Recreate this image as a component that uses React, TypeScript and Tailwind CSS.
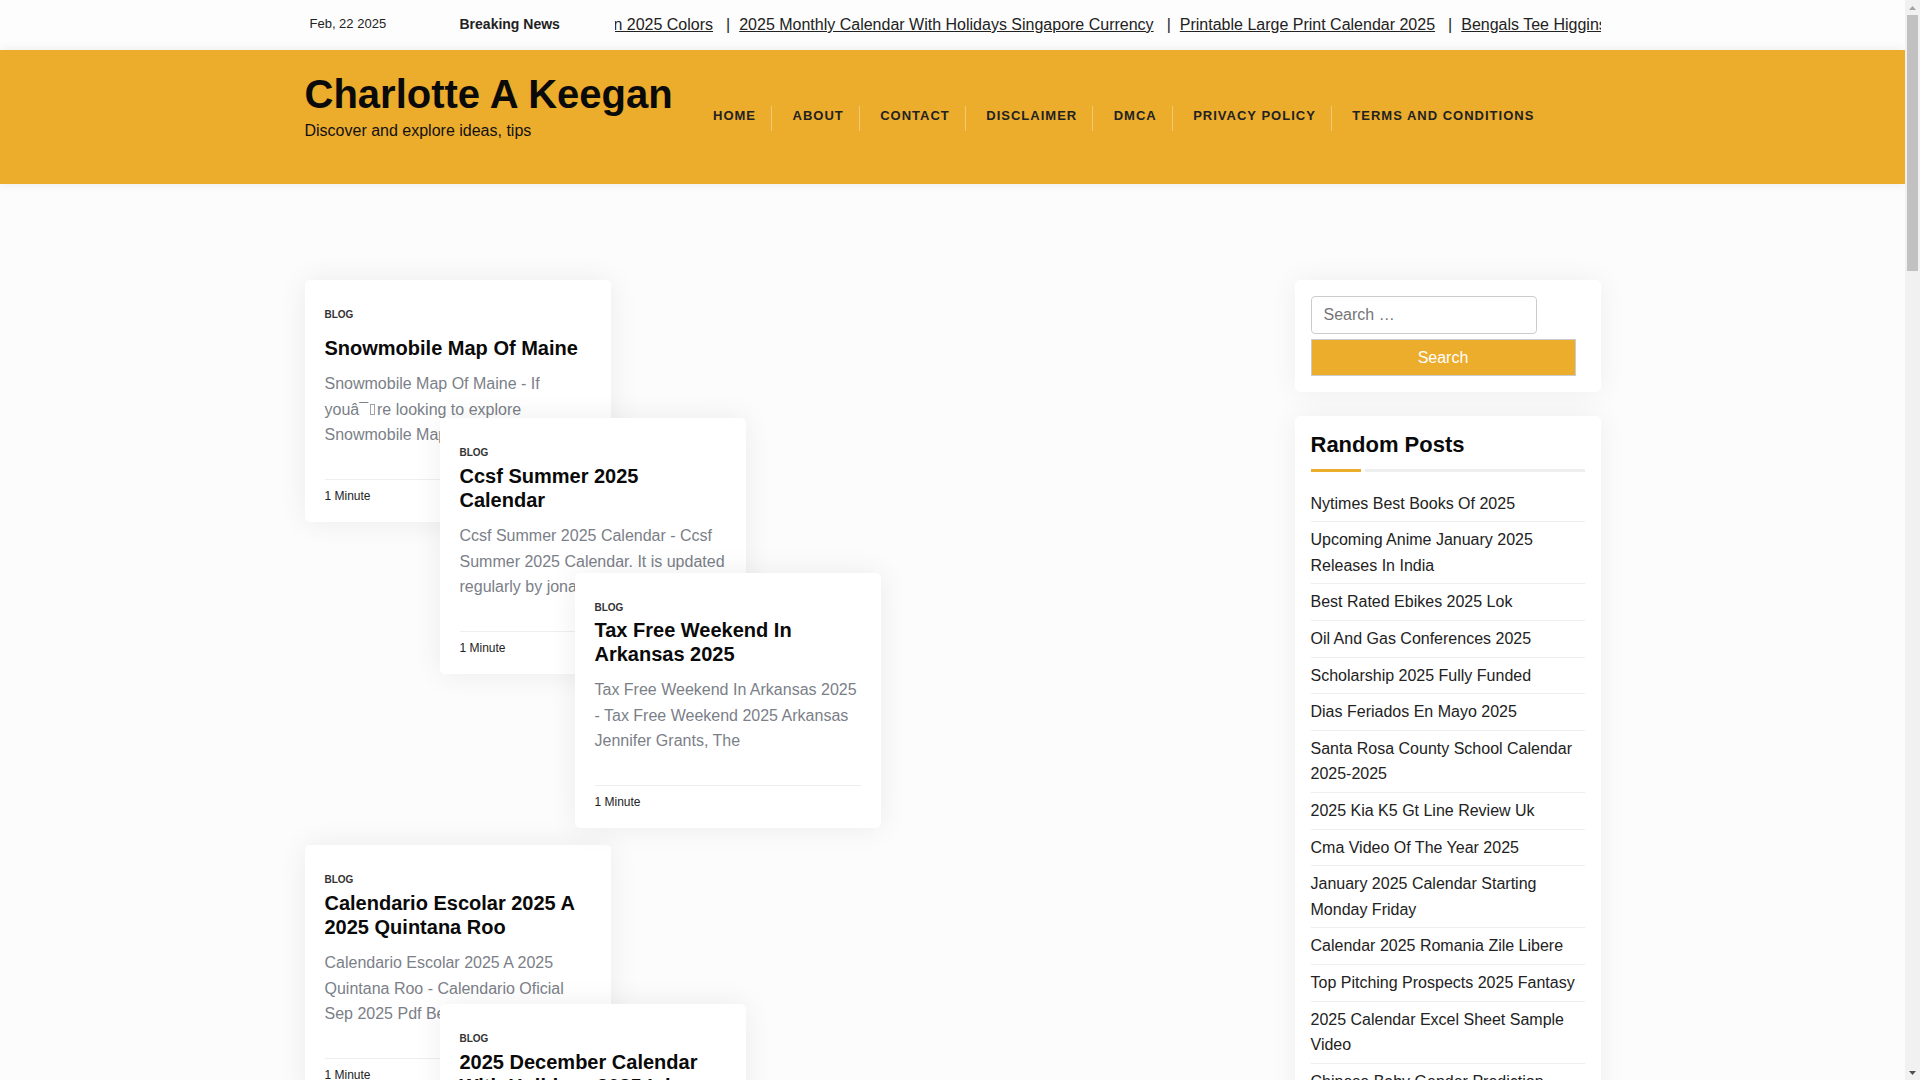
const tickerItems = [
  "Pantone Autumn 2025 Colors",
  "2025 Monthly Calendar With Holidays Singapore Currency",
  "Printable Large Print Calendar 2025",
  "Bengals Tee Higgins Contract",
];

const navItems = ["Home", "About", "Contact", "Disclaimer", "DMCA", "Privacy Policy", "Terms and Conditions"];

const randomPosts = [
  "Nytimes Best Books Of 2025",
  "Upcoming Anime January 2025 Releases In India",
  "Best Rated Ebikes 2025 Lok",
  "Oil And Gas Conferences 2025",
  "Scholarship 2025 Fully Funded",
  "Dias Feriados En Mayo 2025",
  "Santa Rosa County School Calendar 2025-2025",
  "2025 Kia K5 Gt Line Review Uk",
  "Cma Video Of The Year 2025",
  "January 2025 Calendar Starting Monday Friday",
  "Calendar 2025 Romania Zile Libere",
  "Top Pitching Prospects 2025 Fantasy",
  "2025 Calendar Excel Sheet Sample Video",
  "Chinese Baby Gender Prediction",
];

function PostCard({ title, children, className, titleClass = "mt-[5px]" }: { title: string; children: React.ReactNode; className: string; titleClass?: string }) {
  return (
    <article className={`absolute w-[306px] rounded-[5px] bg-white pt-[29px] pr-5 pb-[19px] pl-[19.5px] shadow-[0_0_30px_rgba(0,0,0,0.07)] ${className}`}>
      <div className="text-[10px] leading-[12px] font-bold text-[#333] uppercase">Blog</div>
      <h2 className={`text-[20px] leading-[24px] font-bold text-[#0a0a0a] ${titleClass}`}>{title}</h2>
      <p className="mt-[11px] text-[16px] leading-[25.6px] text-[#7b8088]">{children}</p>
      <div className="mt-[31px] border-t border-[#eeeeee] pt-[9px] text-[12px] leading-[14px] text-[#222]">1 Minute</div>
    </article>
  );
}

function Scrollbar() {
  return (
    <div className="flex w-[15px] shrink-0 flex-col bg-[#f1f1f1]">
      <div className="flex h-[15px] items-center justify-center">
        <svg width="7" height="4" viewBox="0 0 7 4"><path d="M3.5 0 7 4H0z" fill="#a3a3a3" /></svg>
      </div>
      <div className="mx-[2px] h-[256px] bg-[#c1c1c1]" />
      <div className="flex-1" />
      <div className="flex h-[15px] items-center justify-center">
        <svg width="7" height="4" viewBox="0 0 7 4"><path d="M0 0h7L3.5 4z" fill="#505050" /></svg>
      </div>
    </div>
  );
}

export default function App() {
  return (
    <div className="flex h-screen overflow-hidden bg-[#fcfcfc] font-['Liberation_Sans',Arial,sans-serif] text-[#222]">
      <div className="min-w-0 flex-1">
        <div className="h-[50px] bg-[#fdfdfd]">
          <div className="mx-auto flex h-full w-[1297px] items-center">
            <span className="mb-[2px] ml-[5.5px] w-[150px] text-[13px]">Feb, 22 2025</span>
            <span className="mb-[1px] w-[155.5px] text-[14px] font-bold">Breaking News</span>
            <div className="min-w-0 flex-1 overflow-hidden whitespace-nowrap text-[16px]">
              <div className="-ml-[111px] flex">
                {tickerItems.map((item, i) => (
                  <span key={item} className="flex shrink-0">
                    <a className="underline">{item}</a>
                    {i < tickerItems.length - 1 && <span className="mr-[9px] ml-[13px]">|</span>}
                  </span>
                ))}
              </div>
            </div>
          </div>
        </div>

        <header className="h-[134px] bg-[#ecac2c] shadow-[0_0_10px_rgba(0,0,0,0.08)]">
          <div className="mx-auto flex w-[1297px] pt-[19px]">
            <div className="w-[409px] shrink-0 pl-[0.5px]">
              <div className="text-[40px] leading-[50px] font-bold text-[#0a0a0a]">Charlotte A Keegan</div>
              <div className="text-[16px] leading-[24px] text-[#111]">Discover and explore ideas, tips</div>
            </div>
            <nav className="mt-[37px] flex h-[25px] items-stretch">
              {navItems.map((item, i) => (
                <a
                  key={item}
                  className={`flex items-center pr-[15px] pb-[6px] text-[13px] font-bold tracking-[1px] text-[#222] uppercase ${i < navItems.length - 1 ? "mr-[20.5px] border-r border-[#f3c872]" : ""}`}
                >
                  {item}
                </a>
              ))}
            </nav>
          </div>
        </header>

        <main className="mx-auto flex w-[1297px] justify-between pt-[96px]">
          <div className="relative flex-1">
            <PostCard className="top-0 left-[1px] z-[1]" titleClass="mt-[15px]" title="Snowmobile Map Of Maine">
              Snowmobile Map Of Maine - If{" "}
              <span className="whitespace-nowrap">
                youâ¯<span className="mx-[2px] inline-block h-[11px] w-[5px] border border-[#a0a4aa]" />re
              </span>{" "}
              looking to explore Snowmobile Map Of Maine
            </PostCard>
            <PostCard className="top-[138px] left-[136px] z-[2]" title="Ccsf Summer 2025 Calendar">
              Ccsf Summer 2025 Calendar - Ccsf Summer 2025 Calendar. It is updated regularly by jonathan
            </PostCard>
            <PostCard className="top-[293px] left-[271px] z-[3]" titleClass="mt-[4px] mb-[1px]" title="Tax Free Weekend In Arkansas 2025">
              Tax Free Weekend In Arkansas 2025 - Tax Free Weekend 2025 Arkansas Jennifer Grants, The
            </PostCard>
            <PostCard className="top-[565px] left-[1px] z-[1]" title="Calendario Escolar 2025 A 2025 Quintana Roo">
              Calendario Escolar 2025 A 2025 Quintana Roo - Calendario Oficial Sep 2025 Pdf Berikut
            </PostCard>
            <PostCard className="top-[724px] left-[136px] z-[2]" title="2025 December Calendar With Holidays 2025 Ink">
              2025 December Calendar With Holidays 2025 Ink
            </PostCard>
          </div>

          <aside className="mr-[0.5px] w-[306px] shrink-0">
            <div className="rounded-[5px] bg-white p-4 shadow-[0_0_30px_rgba(0,0,0,0.06)]">
              <input
                placeholder="Search …"
                className="block h-[38px] w-[226px] rounded-[4px] border border-[#ccc] bg-white px-3 text-[16px] text-[#222] placeholder:text-[#757575]"
              />
              <button className="mt-[5px] block h-[37px] w-[265px] border border-[#ccc] bg-[#ecac2c] text-[16px] text-white">Search</button>
            </div>

            <div className="mt-[24px] rounded-[5px] bg-white px-4 pt-[15px] pb-4 shadow-[0_0_30px_rgba(0,0,0,0.06)]">
              <h2 className="text-[22px] leading-[28px] font-bold text-[#0a0a0a]">Random Posts</h2>
              <div className="mt-[10px] flex h-[3px] gap-1">
                <span className="w-[50px] bg-[#ecac2c]" />
                <span className="flex-1 bg-[#eeeeee]" />
              </div>
              <ul className="mt-[13.7px] text-[16px] leading-[25.6px] text-[#222]">
                {randomPosts.map(post => (
                  <li key={post} className="border-b border-[#eeeeee] py-[5px]">
                    {post}
                  </li>
                ))}
              </ul>
            </div>
          </aside>
        </main>
      </div>
      <Scrollbar />
    </div>
  );
}
